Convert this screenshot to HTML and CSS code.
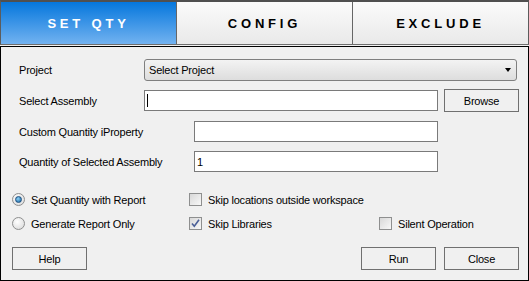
FILE: index.html
```html
<html>

<head lang="en">
    <title>Set Quantity</title>
    <link rel="stylesheet" href="styles.css">
</head>

<body>
    <div class="tabs">
        <div class="tab active">SET QTY</div>
        <div class="tab">CONFIG</div>
        <div class="tab">EXCLUDE</div>
    </div>

    <div class="panel">
        <div class="row row-project">
            <label class="field-label">Project</label>
            <div class="dropdown">
                <span>Select Project</span>
                <span class="arrow"></span>
            </div>
        </div>

        <div class="row row-assembly">
            <label class="field-label">Select Assembly</label>
            <div class="textbox wide"><span class="caret"></span></div>
            <button class="btn browse">Browse</button>
        </div>

        <div class="row row-small">
            <label class="field-label long">Custom Quantity iProperty</label>
            <div class="textbox"></div>
        </div>

        <div class="row row-small">
            <label class="field-label long">Quantity of Selected Assembly</label>
            <div class="textbox">1</div>
        </div>

        <div class="options">
            <div class="option">
                <span class="radio checked"></span>
                <span>Set Quantity with Report</span>
            </div>
            <div class="option">
                <span class="check"></span>
                <span>Skip locations outside workspace</span>
            </div>
            <div></div>

            <div class="option">
                <span class="radio"></span>
                <span>Generate Report Only</span>
            </div>
            <div class="option">
                <span class="check">
                    <svg width="11" height="11" viewBox="0 0 11 11">
                        <path d="M2 5.5 L4.3 8.3 L9 1.8" fill="none" stroke="#4a5f97" stroke-width="1.6"/>
                    </svg>
                </span>
                <span>Skip Libraries</span>
            </div>
            <div class="option">
                <span class="check"></span>
                <span>Silent Operation</span>
            </div>
        </div>

        <div class="footer">
            <button class="btn">Help</button>
            <div class="footer-right">
                <button class="btn">Run</button>
                <button class="btn">Close</button>
            </div>
        </div>
    </div>
</body>

</html>
```

FILE: styles.css
```css
body {
    margin: 0;
    width: 529px;
    height: 281px;
    background-color: #f0f0f0;
    font-family: "Liberation Sans", Arial, sans-serif;
    font-size: 11px;
    letter-spacing: -0.2px;
    color: #000;
}

.tabs {
    display: flex;
    height: 42px;
    border-top: 2px solid #505050;
    border-left: 1px solid #5c5c5c;
    border-right: 1px solid #5c5c5c;
    border-bottom: 1px solid #6e6e6e;
}

.tab {
    flex: 1;
    display: flex;
    align-items: center;
    justify-content: center;
    font-size: 13px;
    font-weight: bold;
    letter-spacing: 3.8px;
    background: linear-gradient(#fbfbfb, #e9e9e9);
    border-left: 1px solid #666;
}

.tab:first-child {
    border-left: none;
}

.tab.active {
    color: #fff;
    background: linear-gradient(#0577dd, #72b2f0);
}

.panel {
    margin-top: 1px;
    height: 233px;
    border: 1px solid #000;
    background-color: #f0f0f0;
}

.row {
    display: flex;
    align-items: center;
    padding-left: 18px;
}

.field-label {
    width: 125px;
}

.field-label.long {
    width: 175px;
}

.row-project {
    margin-top: 12px;
    height: 22px;
}

.row-assembly {
    margin-top: 8px;
    height: 23px;
}

.row-small {
    margin-top: 9px;
    height: 21px;
}

.dropdown {
    width: 363px;
    height: 20px;
    padding: 0 4px 0 4px;
    display: flex;
    align-items: center;
    justify-content: space-between;
    border: 1px solid #7f7f7f;
    border-radius: 3px;
    background: linear-gradient(#f3f3f3, #dddddd);
}

.arrow {
    width: 0;
    height: 0;
    margin-right: 1px;
    border-left: 3.5px solid transparent;
    border-right: 3.5px solid transparent;
    border-top: 4px solid #000;
}

.textbox {
    width: 240px;
    height: 19px;
    padding-left: 2px;
    display: flex;
    align-items: center;
    background-color: #fff;
    border: 1px solid #7a7a7a;
}

.textbox.wide {
    width: 290px;
}

.caret {
    width: 1px;
    height: 13px;
    background-color: #000;
}

.btn {
    width: 75px;
    height: 23px;
    padding: 0;
    font-family: "Liberation Sans", Arial, sans-serif;
    font-size: 11px;
    letter-spacing: -0.2px;
    color: #000;
    background-color: #f0f0f0;
    border: 1px solid #707070;
}

.browse {
    margin-left: 6px;
}

.options {
    display: grid;
    grid-template-columns: 177px 190px auto;
    row-gap: 11px;
    margin-top: 21px;
    padding-left: 11px;
}

.option {
    display: flex;
    align-items: center;
    gap: 6px;
    height: 13px;
}

.radio {
    width: 11px;
    height: 11px;
    border: 1px solid #8e8f8f;
    border-radius: 50%;
    background: radial-gradient(circle at 40% 35%, #ffffff, #d6d6d6);
    display: flex;
    align-items: center;
    justify-content: center;
}

.radio.checked::after {
    content: "";
    width: 5px;
    height: 5px;
    border-radius: 50%;
    background: radial-gradient(circle at 40% 35%, #8fd2f7, #0f5f9c);
    border: 1px solid #1f4f7f;
}

.check {
    width: 11px;
    height: 11px;
    border: 1px solid #8e8f8f;
    background: linear-gradient(135deg, #d8d8d8, #f8f8f8);
    display: flex;
    align-items: center;
    justify-content: center;
}

.footer {
    display: flex;
    justify-content: space-between;
    margin-top: 17px;
    padding: 0 9px 0 11px;
}

.footer-right {
    display: flex;
    gap: 8px;
}
```
